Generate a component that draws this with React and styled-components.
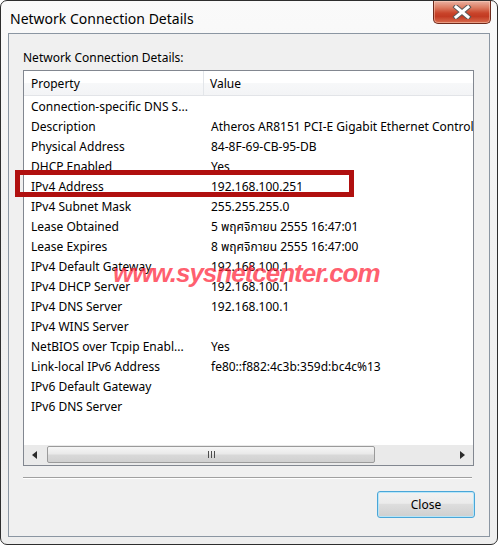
import React from "react";
import styled, { createGlobalStyle } from "styled-components";

const GlobalStyle = createGlobalStyle`
  html, body {
    margin: 0;
    padding: 0;
    background: #ffffff;
  }
  * {
    box-sizing: border-box;
  }
`;

const rows = [
  ["Connection-specific DNS S...", ""],
  ["Description", "Atheros AR8151 PCI-E Gigabit Ethernet Controller (NDIS 6.20)"],
  ["Physical Address", "84-8F-69-CB-95-DB"],
  ["DHCP Enabled", "Yes"],
  ["IPv4 Address", "192.168.100.251"],
  ["IPv4 Subnet Mask", "255.255.255.0"],
  ["Lease Obtained", "5 พฤศจิกายน 2555 16:47:01"],
  ["Lease Expires", "8 พฤศจิกายน 2555 16:47:00"],
  ["IPv4 Default Gateway", "192.168.100.1"],
  ["IPv4 DHCP Server", "192.168.100.1"],
  ["IPv4 DNS Server", "192.168.100.1"],
  ["IPv4 WINS Server", ""],
  ["NetBIOS over Tcpip Enabl...", "Yes"],
  ["Link-local IPv6 Address", "fe80::f882:4c3b:359d:bc4c%13"],
  ["IPv6 Default Gateway", ""],
  ["IPv6 DNS Server", ""],
];

export default function App() {
  return (
    <>
      <GlobalStyle />
      <Window>
        <TitleBar>
          <Title>Network Connection Details</Title>
          <CloseX aria-label="close">
            <svg width="20" height="14" viewBox="0 0 20 14">
              <path d="M4 2 L16 12 M16 2 L4 12" stroke="#5a5a5a" strokeWidth="5" strokeLinecap="square" />
              <path d="M4 2 L16 12 M16 2 L4 12" stroke="#ffffff" strokeWidth="3" strokeLinecap="square" />
            </svg>
          </CloseX>
        </TitleBar>

        <Client>
          <Label>Network Connection Details:</Label>
          <ListBox>
            <HeaderRow>
              <HeadCell $w={180}>Property</HeadCell>
              <HeadCell>Value</HeadCell>
            </HeaderRow>
            <Body>
              {rows.map(([k, v]) => (
                <Row key={k}>
                  <Cell $w={180}>{k}</Cell>
                  <Cell>{v}</Cell>
                </Row>
              ))}
            </Body>
            <HScroll>
              <ArrowBtn>
                <svg width="6" height="8" viewBox="0 0 6 8"><path d="M5 0 L0 4 L5 8 Z" fill="#2b2b2b" /></svg>
              </ArrowBtn>
              <Track>
                <Thumb>
                  <Grip>
                    <i /><i /><i />
                  </Grip>
                </Thumb>
              </Track>
              <ArrowBtn>
                <svg width="6" height="8" viewBox="0 0 6 8"><path d="M1 0 L6 4 L1 8 Z" fill="#2b2b2b" /></svg>
              </ArrowBtn>
            </HScroll>
          </ListBox>

          <Separator />

          <Footer>
            <Button>Close</Button>
          </Footer>
        </Client>

        <Highlight />
        <Watermark>www.sysnetcenter.com</Watermark>
      </Window>
    </>
  );
}

const Window = styled.div`
  position: relative;
  width: 498px;
  height: 545px;
  border: 1px solid #2e2e2e;
  border-radius: 7px;
  background: linear-gradient(180deg, #fafafa 0%, #f1f1f1 40%, #eeeeee 100%);
  display: flex;
  flex-direction: column;
  font-family: "Noto Sans", "Liberation Sans", Arial, sans-serif;
  color: #000;
  overflow: hidden;
`;

const TitleBar = styled.div`
  height: 32px;
  display: flex;
  align-items: flex-start;
  padding: 0 6px 0 9px;
`;

const Title = styled.div`
  font-size: 14px;
  line-height: 18px;
  margin-top: 9px;
  color: #000;
`;

const CloseX = styled.div`
  margin-left: auto;
  width: 58px;
  height: 23px;
  border: 1px solid #6e2a1c;
  border-top: none;
  border-radius: 0 0 5px 5px;
  background: linear-gradient(
    180deg,
    #eab2a2 0%,
    #dc7c62 30%,
    #c9442a 55%,
    #c23a22 70%,
    #d96d4f 100%
  );
  box-shadow: inset 0 0 0 1px rgba(255, 220, 200, 0.45);
  display: flex;
  align-items: center;
  justify-content: center;
`;

const Client = styled.div`
  flex: 1;
  margin: 0 7px 7px 7px;
  border: 1px solid #8b96a2;
  background: #f0f0f0;
  display: flex;
  flex-direction: column;
  padding: 15px 15px 0 14px;
`;

const Label = styled.div`
  font-size: 12px;
  line-height: 17px;
  margin-bottom: 4px;
`;

const ListBox = styled.div`
  height: 396px;
  border: 1px solid #828790;
  background: #ffffff;
  display: flex;
  flex-direction: column;
  overflow: hidden;
`;

const HeaderRow = styled.div`
  height: 25px;
  display: flex;
  background: linear-gradient(180deg, #ffffff 0%, #ffffff 50%, #f7f8f9 51%, #f3f4f6 100%);
  border-bottom: 1px solid #e2e4e8;
  flex-shrink: 0;
`;

const HeadCell = styled.div`
  width: ${(p) => (p.$w ? `${p.$w}px` : "auto")};
  flex: ${(p) => (p.$w ? "none" : "1")};
  font-size: 12px;
  line-height: 22px;
  padding-top: 2px;
  padding-left: ${(p) => (p.$w ? "7px" : "6px")};
  border-right: ${(p) => (p.$w ? "1px solid #e3e6ea" : "none")};
  white-space: nowrap;
`;

const Body = styled.div`
  flex: 1;
  padding-top: 1px;
`;

const Row = styled.div`
  height: 20px;
  display: flex;
  white-space: nowrap;
`;

const Cell = styled.div`
  width: ${(p) => (p.$w ? `${p.$w}px` : "auto")};
  flex: ${(p) => (p.$w ? "none" : "1")};
  font-size: 12px;
  line-height: 20px;
  padding-left: 7px;
  overflow: hidden;
  white-space: nowrap;
  font-family: "Noto Sans", "Liberation Sans", "Noto Sans Thai", "Tahoma", sans-serif;
`;

const HScroll = styled.div`
  height: 20px;
  display: flex;
  align-items: center;
  background: #eaeaea;
  flex-shrink: 0;
  padding: 1px 0 2px;
`;

const ArrowBtn = styled.div`
  width: 22px;
  height: 17px;
  display: flex;
  align-items: center;
  justify-content: center;
`;

const Track = styled.div`
  flex: 1;
  height: 17px;
  display: flex;
  padding-left: 1px;
`;

const Thumb = styled.div`
  width: 328px;
  height: 17px;
  border: 1px solid #9a9a9a;
  border-radius: 2px;
  background: linear-gradient(180deg, #f6f6f6 0%, #e9e9e9 48%, #d9d9d9 52%, #d0d0d0 100%);
  display: flex;
  align-items: center;
  justify-content: center;
`;

const Grip = styled.div`
  display: flex;
  gap: 2px;
  i {
    display: block;
    width: 1px;
    height: 7px;
    background: #4d4d4d;
  }
`;

const Separator = styled.div`
  margin-top: 11px;
  height: 2px;
  border-top: 1px solid #a0a0a0;
  border-bottom: 1px solid #ffffff;
  margin-right: 2px;
`;

const Footer = styled.div`
  display: flex;
  justify-content: flex-end;
  padding-top: 12px;
  padding-right: 0;
`;

const Button = styled.div`
  width: 98px;
  height: 27px;
  margin-right: -1px;
  border: 1px solid #4aa6d8;
  border-radius: 3px;
  background: linear-gradient(180deg, #f2f2f2 0%, #ebebeb 45%, #dddddd 50%, #cfcfcf 100%);
  box-shadow: inset 0 0 0 1px rgba(180, 230, 250, 0.9);
  font-size: 12px;
  line-height: 25px;
  text-align: center;
`;

const Highlight = styled.div`
  position: absolute;
  left: 14px;
  top: 169px;
  width: 339px;
  height: 27px;
  border: 5px solid #b0100f;
  pointer-events: none;
`;

const Watermark = styled.div`
  position: absolute;
  left: 112px;
  top: 257px;
  font-family: "Liberation Sans", Arial, sans-serif;
  font-size: 26px;
  font-weight: 700;
  font-style: italic;
  letter-spacing: -1px;
  line-height: 30px;
  color: rgba(255, 35, 55, 0.72);
  pointer-events: none;
  white-space: nowrap;
`;
